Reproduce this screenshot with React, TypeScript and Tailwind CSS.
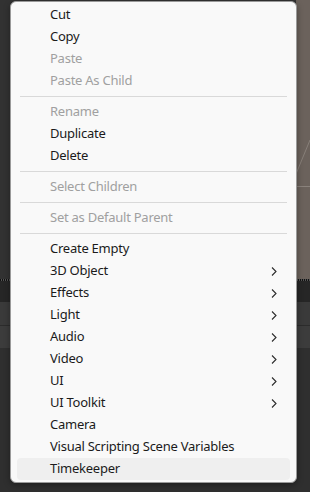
import React from 'react';

type Item = { label: string; disabled?: boolean; sub?: boolean; active?: boolean } | 'sep';

const items: Item[] = [
  { label: 'Cut' },
  { label: 'Copy' },
  { label: 'Paste', disabled: true },
  { label: 'Paste As Child', disabled: true },
  'sep',
  { label: 'Rename', disabled: true },
  { label: 'Duplicate' },
  { label: 'Delete' },
  'sep',
  { label: 'Select Children', disabled: true },
  'sep',
  { label: 'Set as Default Parent', disabled: true },
  'sep',
  { label: 'Create Empty' },
  { label: '3D Object', sub: true },
  { label: 'Effects', sub: true },
  { label: 'Light', sub: true },
  { label: 'Audio', sub: true },
  { label: 'Video', sub: true },
  { label: 'UI', sub: true },
  { label: 'UI Toolkit', sub: true },
  { label: 'Camera' },
  { label: 'Visual Scripting Scene Variables' },
  { label: 'Timekeeper', active: true },
];

const Chevron = () => (
  <svg width="6" height="9" viewBox="0 0 6 9" fill="none">
    <path d="M1 0.5 L5 4.5 L1 8.5" stroke="#2b2b2b" strokeWidth="1.1" />
  </svg>
);

export default function App() {
  return (
    <div className="relative w-[310px] h-[492px] overflow-hidden bg-[#2f2f2f]" style={{ fontFamily: '"Noto Sans", "Open Sans", sans-serif' }}>
      {/* editor behind the menu */}
      <div className="flex flex-col">
        <div className="flex h-[279px]">
          <div className="w-[296px] bg-[#323232]" />
          <div className="relative flex-1 bg-[#6b625c]">
            <div className="absolute left-0 right-0 top-[186px] h-px bg-[#8a827c]" />
            <svg className="absolute left-0 top-[140px]" width="14" height="34">
              <line x1="0" y1="34" x2="14" y2="0" stroke="#877f79" strokeWidth="1" />
            </svg>
          </div>
        </div>
        <div className="h-[2px] bg-[repeating-linear-gradient(90deg,#111_0_1px,#555_1px_2px)]" />
        <div className="h-[21px] bg-[#262626]" />
        <div className="h-[23px] bg-[#3a3a3a]" />
        <div className="h-px bg-[#2c2c2c]" />
        <div className="h-[22px] bg-[#3c3c3c]" />
      </div>

      {/* context menu */}
      <div className="absolute left-[10px] top-[1px] w-[287px] h-[482px] rounded-[6px] border border-[#9a9a9a] bg-[#f9f9f9] shadow-[0_2px_6px_rgba(0,0,0,0.35)] pt-[2px] px-[6px]">
        {items.map((it, i) =>
          it === 'sep' ? (
            <div key={i} className="h-[9px] flex items-center px-[3px]">
              <div className="h-px w-full bg-[#d9d9d9]" />
            </div>
          ) : (
            <div
              key={i}
              className={
                'h-[22px] flex items-center justify-between pl-[33px] pr-[13px] rounded-[4px] text-[13px] tracking-[-0.25px] ' +
                (it.disabled ? 'text-[#a0a0a0] ' : 'text-[#1b1b1b] ') +
                (it.active ? 'bg-[#efefef]' : '')
              }
            >
              <span>{it.label}</span>
              {it.sub && <Chevron />}
            </div>
          )
        )}
      </div>
    </div>
  );
}
